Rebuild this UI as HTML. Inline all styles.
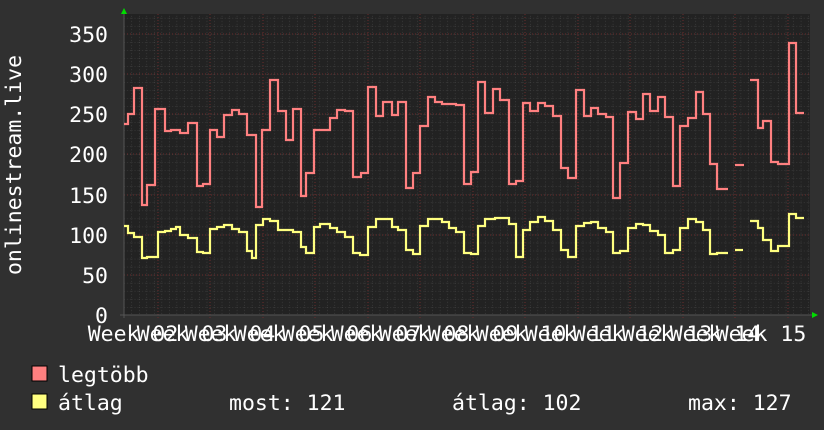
<!DOCTYPE html>
<html><head><meta charset="utf-8"><style>
html,body{margin:0;padding:0;background:#303030;}
svg{display:block}
text{font-family:"DejaVu Sans Mono","Liberation Mono",monospace;fill:#fff}
</style></head><body>
<svg width="824" height="430" xmlns="http://www.w3.org/2000/svg">
<defs>
<pattern id="minor" x="124" y="315" width="7.52" height="8.03" patternUnits="userSpaceOnUse">
<line x1="0" y1="0" x2="7.52" y2="0" stroke="#4a4a4a" stroke-width="1" stroke-dasharray="1,2"/>
<line x1="0" y1="0" x2="0" y2="8.03" stroke="#4a4a4a" stroke-width="1" stroke-dasharray="1,2"/>
</pattern>
</defs>
<rect x="0" y="0" width="824" height="430" fill="#303030"/>
<rect x="124" y="14" width="686" height="301" fill="#222222"/>
<rect x="124" y="14" width="686" height="301" fill="url(#minor)"/>
<g stroke="#6a2c2c" stroke-width="1" stroke-dasharray="1,2">
<line x1="124" y1="275" x2="810" y2="275"/><line x1="124" y1="235" x2="810" y2="235"/>
<line x1="124" y1="195" x2="810" y2="195"/><line x1="124" y1="154" x2="810" y2="154"/>
<line x1="124" y1="114" x2="810" y2="114"/><line x1="124" y1="74" x2="810" y2="74"/>
<line x1="124" y1="34" x2="810" y2="34"/>
<line x1="158" y1="14" x2="158" y2="318"/><line x1="210" y1="14" x2="210" y2="318"/>
<line x1="263" y1="14" x2="263" y2="318"/><line x1="315" y1="14" x2="315" y2="318"/>
<line x1="368" y1="14" x2="368" y2="318"/><line x1="420" y1="14" x2="420" y2="318"/>
<line x1="473" y1="14" x2="473" y2="318"/><line x1="525" y1="14" x2="525" y2="318"/>
<line x1="578" y1="14" x2="578" y2="318"/><line x1="630" y1="14" x2="630" y2="318"/>
<line x1="683" y1="14" x2="683" y2="318"/><line x1="735" y1="14" x2="735" y2="318"/>
<line x1="788" y1="14" x2="788" y2="318"/>
</g>
<line x1="124" y1="10" x2="124" y2="318" stroke="#555" stroke-width="1"/>
<line x1="120" y1="315" x2="814" y2="315" stroke="#555" stroke-width="1"/>
<polygon points="121,14 127,14 124,8" fill="#00dd00"/>
<polygon points="812,312 812,318 818,315" fill="#00dd00"/>

<g fill="none" stroke="#ff8080" stroke-width="2.2">
<path d="M124 124H128V114H134V88H142V205H147V185H155V109H165V131H171V130H180V133H188V123H197V186H203V184H210V130H217V137H224V115H232V110H239V114H247V135H256V207H262V130H270V80H278V111H286V140H293V109H301V196H306V173H314V130H330V118H337V110H345V111H353V177H361V173H368V87H376V116H383V102H392V115H398V102H406V188H413V173H420V126H428V97H435V102H442V104H456V105H464V184H471V172H478V82H485V113H493V89H500V100H509V184H516V181H523V103H530V111H538V103H545V106H553V116H561V168H568V178H576V90H584V116H591V108H598V114H606V117H613V198H620V163H628V112H636V119H643V94H650V111H658V97H665V117H673V186H680V126H688V118H696V92H703V114H710V164H717V189H728"/>
<path d="M735 165H744"/>
<path d="M750 80H758V128H763V121H771V162H778V164H789V43H796V113H804"/>
</g>
<g fill="none" stroke="#ffff80" stroke-width="2.2">
<path d="M124 226H128V233H134V237H142V258H147V257H158V232H165V231H171V229H176V227H180V235H188V238H197V252H203V253H210V229H217V227H224V225H232V229H239V232H247V251H252V258H256V225H263V219H270V221H278V230H286V230H293V232H301V247H306V253H314V227H320V224H330V228H337V232H345V237H353V253H360V255H368V227H376V219H392V227H398V230H406V250H413V254H420V226H428V219H442V222H449V228H456V232H464V253H471V254H478V226H485V219H495V218H509V224H516V257H523V230H530V222H538V217H545V221H553V230H561V250H568V257H576V226H584V223H591V222H598V228H606V232H613V253H620V251H628V228H636V224H643V225H650V231H658V235H665V253H673V250H680V228H688V219H696V222H703V230H710V254H717V253H728"/>
<path d="M735 250H743"/>
<path d="M750 221H758V228H763V240H771V251H778V246H789V214H796V218H804"/>
</g>

<g font-size="21.5" text-anchor="end">
<text x="108" y="42">350</text><text x="108" y="82">300</text>
<text x="108" y="122">250</text><text x="108" y="162">200</text>
<text x="108" y="203">150</text><text x="108" y="243">100</text>
<text x="108" y="283">50</text><text x="108" y="323">0</text>
</g>
<text x="21" y="165" font-size="21.5" text-anchor="middle" transform="rotate(-90 21 165)">onlinestream.live</text>
<g font-size="21.5" text-anchor="middle">
<text x="133" y="341">Week 02</text><text x="182" y="341">Week 03</text>
<text x="230" y="341">Week 04</text><text x="279" y="341">Week 05</text>
<text x="327" y="341">Week 06</text><text x="376" y="341">Week 07</text>
<text x="424" y="341">Week 08</text><text x="473" y="341">Week 09</text>
<text x="521" y="341">Week 10</text><text x="570" y="341">Week 11</text>
<text x="618" y="341">Week 12</text><text x="667" y="341">Week 13</text>
<text x="715" y="341">Week 14</text><text x="761" y="341">Week 15</text>
</g>
<rect x="32" y="366" width="15" height="15" fill="#ff8080" stroke="#000" stroke-width="1"/>
<rect x="32" y="394" width="15" height="15" fill="#ffff80" stroke="#000" stroke-width="1"/>
<g font-size="21.5">
<text x="58" y="382">legtöbb</text>
<text x="58" y="410">átlag</text>
<text x="229" y="410">most: 121</text>
<text x="452" y="410">átlag: 102</text>
<text x="688" y="410">max: 127</text>
</g>
</svg>
</body></html>
